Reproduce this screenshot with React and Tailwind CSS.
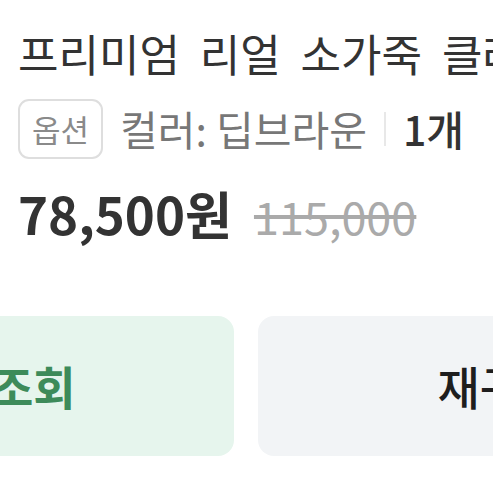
export default function App() {
  const font = { fontFamily: '"Noto Sans CJK KR", "Noto Sans", sans-serif' };
  return (
    <div className="w-[493px] h-[493px] overflow-hidden bg-white" style={font}>
      <div className="pl-[18px] pt-[24px] whitespace-nowrap">
        <div className="text-[44px] leading-[58px] text-[#333333] [word-spacing:10px]">
          프리미엄 리얼 소가죽 클러치백
        </div>
        <div className="flex items-center mt-[17px] h-[60px]">
          <span className="flex items-center justify-center h-[60px] px-[12px] rounded-[11px] border-2 border-[#dedede] text-[31px] text-[#8a8a8a]">
            옵션
          </span>
          <span className="ml-[17px] text-[41px] text-[#777777]">컬러: 딥브라운</span>
          <span className="mx-[17px] w-[2px] h-[34px] bg-[#e8e8e8]" />
          <span className="text-[41px] font-medium text-[#333333]">1개</span>
        </div>
        <div className="flex items-baseline mt-[22px]">
          <span className="text-[51px] font-bold text-[#333333] leading-[64px]">78,500원</span>
          <span className="ml-[22px] text-[45px] text-[#aaaaaa] line-through">115,000</span>
        </div>
      </div>
      <div className="flex gap-[24px] ml-[-252px] mt-[66px]">
        <div className="w-[486px] h-[140px] shrink-0 rounded-[16px] bg-[#e6f5ed] flex items-center justify-center text-[46px] font-bold text-[#3d8b5a]">
          배송조회
        </div>
        <div className="w-[486px] h-[140px] shrink-0 rounded-[16px] bg-[#f2f4f6] flex items-center justify-center text-[46px] font-medium text-[#1e1e1e]">
          재구매
        </div>
      </div>
    </div>
  );
}
